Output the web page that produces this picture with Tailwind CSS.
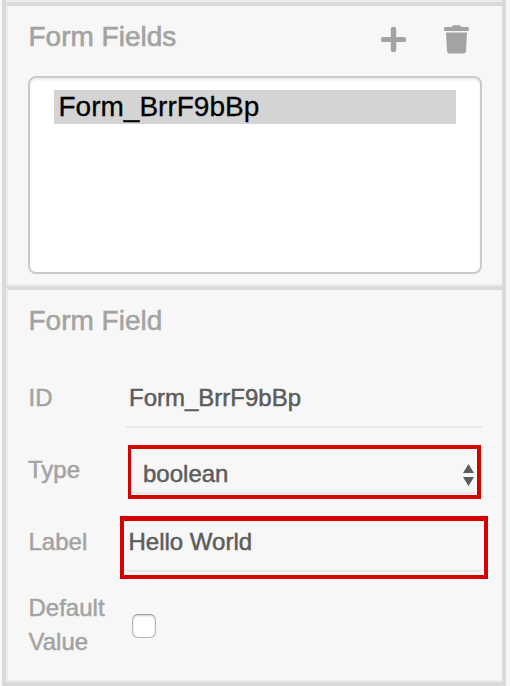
<!DOCTYPE html>
<html lang="en">
<head>
<meta charset="utf-8">
<title>Form Fields</title>
<script src="https://cdn.jsdelivr.net/npm/@tailwindcss/browser@4"></script>
</head>
<body class="h-[686px] w-[510px] overflow-hidden bg-[#f7f7f7] font-['Liberation_Sans',Arial,sans-serif] text-[24px] leading-[34px]">
<main class="ml-[2px] flex h-[686px] w-[504px] flex-col border-x-4 border-b-4 border-[#dadada]">
  <div class="h-[2px] shrink-0 bg-[#ececec]"></div>
  <section class="flex h-[284px] shrink-0 flex-col border-t-4 border-b-2 border-l-2 border-t-[#dadada] border-b-[#ececec] border-l-[#ebebeb] pl-5">
    <header class="flex h-[70px] items-start">
      <h2 class="w-[353px] pt-[15px] pl-[0.5px] text-[28px] leading-[32px] text-[#a3a3a3] [-webkit-text-stroke:0.6px_#a3a3a3]">Form Fields</h2>
      <button aria-label="Add" class="mt-[21px] h-[26px] w-[25px]">
        <svg class="block" width="25" height="26" viewBox="0 0 25 26" fill="#a3a3a3"><path d="M11.500 0h2q1.700 0 1.700 1.700v8.300h8.100Q25 10 25 11.700v1.700q0 1.700-1.700 1.700h-8.100v8.200q0 1.700-1.700 1.700h-2q-1.700 0-1.700-1.700v-8.200H1.700Q0 15.100 0 13.400v-1.700Q0 10 1.700 10h8.100V1.700Q9.800 0 11.500 0z"/></svg>
      </button>
      <button aria-label="Delete" class="mt-[19px] ml-[38px] h-[29px] w-[25px]">
        <svg class="block" width="25" height="29" viewBox="0 0 25 29" fill="#a3a3a3"><path d="M1.200 2h6.600q.4-1.700 2-1.700h5.500q1.600 0 2 1.700h6.500q1 0 1 1v2q0 .9-1 .9H1q-.9 0-.9-.9V3q0-1 1.100-1zM2 7.500h21l-1 18.300q-.2 2.800-2.800 2.800H5.700q-2.500 0-2.700-2.800z"/></svg>
      </button>
    </header>
    <div class="h-[198px] w-[454px] rounded-[8px] border-2 border-[#cacaca] bg-white pt-3 pl-6 shadow-[inset_0_2px_3px_rgba(0,0,0,0.08)]">
      <div class="h-[34px] w-[402px] bg-[#d4d4d4] pl-[4.500px] text-[28px] leading-[33px] text-black [-webkit-text-stroke:0.3px_#000]">Form_BrrF9bBp</div>
    </div>
  </section>
  <section class="flex min-h-0 grow flex-col border-t-4 border-b-2 border-l-2 border-t-[#dadada] border-b-[#ececec] border-l-[#ebebeb] pl-5 text-[#a3a3a3] [-webkit-text-stroke:0.5px_currentColor]">
    <h2 class="h-[84px] pt-[15px] pl-[0.5px] text-[28px] leading-[32px]">Form Field</h2>
    <div class="flex h-[71px]">
      <label class="w-[98px] pt-[7px] pl-[0.5px]">ID</label>
      <div class="h-[54px] w-[356px] border-b-2 border-[#e8e8e8] pt-[7px] pl-[3px] text-[#5c5c5c]">Form_BrrF9bBp</div>
    </div>
    <div class="flex h-[71px]">
      <label class="w-[100px] pt-2">Type</label>
      <div class="h-[54px] w-[353px] border-4 border-l-[3px] border-[#d60000]">
        <div class="flex h-[45px] items-start justify-between rounded-b-[6px] border-b-2 border-[#e8e8e8] pt-2 pr-[3px] pl-3 text-[#5c5c5c]">
          <span>boolean</span>
          <svg class="mt-[7px]" width="11" height="22" viewBox="0 0 11 22" fill="#5c5c5c"><path d="M5.500 0 11 9H0zM0 13h11l-5.500 9z"/></svg>
        </div>
      </div>
    </div>
    <div class="flex h-[75px]">
      <label class="w-[92px] pt-[9px] pl-[0.5px]">Label</label>
      <div class="h-[63px] w-[368px] border-4 border-t-[5px] border-[#d60000] pr-[2px] pl-[2px]">
        <div class="h-[51px] border-b-2 border-[#e8e8e8] pt-1 pl-[2.500px] text-[#5c5c5c]">Hello World</div>
      </div>
    </div>
    <div class="flex">
      <label class="w-[104px] pl-[0.5px]">Default<br>Value</label>
      <input type="checkbox" class="mt-[23px] h-6 w-6 appearance-none rounded-[6px] border border-[#b5b5b5] border-t-[#999999] bg-white shadow-[inset_0_1px_2px_rgba(0,0,0,0.2)]">
    </div>
  </section>
</main>
</body>
</html>
